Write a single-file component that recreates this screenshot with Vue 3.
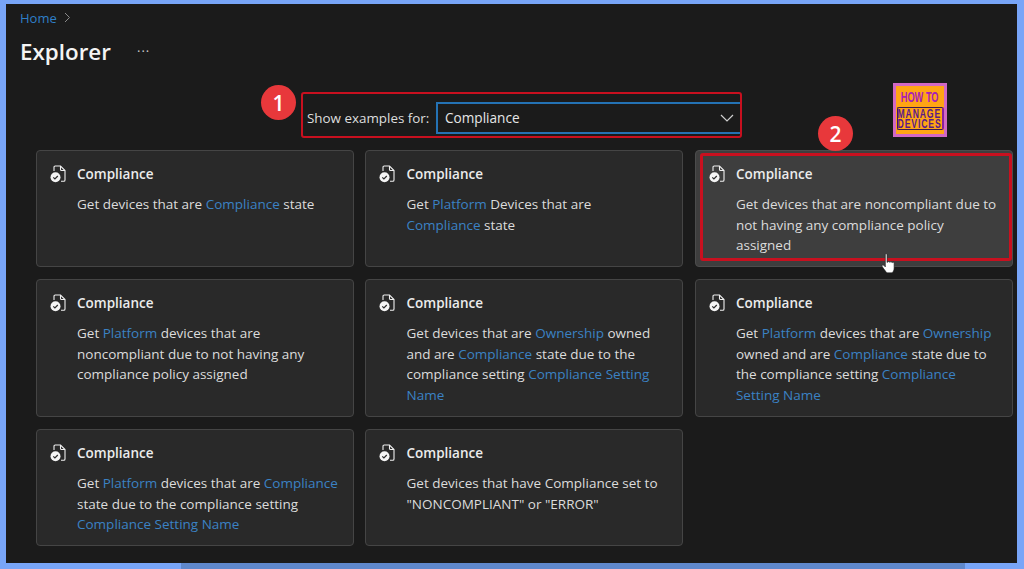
<template>
  <div class="page">
    <div class="panel">
      <nav class="crumbs">
        <span class="home">Home</span>
        <svg class="crumb-arrow" width="7" height="11" viewBox="0 0 7 11"><path d="M1 1l4.5 4.5L1 10" fill="none" stroke="#8a8a8a" stroke-width="1" /></svg>
      </nav>
      <div class="title-row">
        <h1>Explorer</h1>
        <span class="more">···</span>
      </div>

      <div class="toolbar">
        <div class="picker">
          <span class="badge badge-one">1</span>
          <label>Show examples for:</label>
          <div class="select">
            <span>Compliance</span>
            <svg width="14" height="8" viewBox="0 0 14 8"><path d="M1 1l6 6 6-6" fill="none" stroke="#cfcfcf" stroke-width="1.2" /></svg>
          </div>
        </div>
        <div class="logo">
          <span class="how">HOW TO</span>
          <div class="manage">
            <span>MANAGE</span>
            <span>DEVICES</span>
          </div>
        </div>
      </div>

      <div class="cards">
        <div
          v-for="(card, index) in cards"
          :key="index"
          class="card"
          :class="{ active: card.active }"
        >
          <span v-if="card.active" class="badge badge-two">2</span>
          <div v-if="card.active" class="highlight"></div>
          <div class="card-head">
            <svg class="doc" width="17" height="18" viewBox="0 0 17 18">
              <path d="M4 6V2.2C4 1.5 4.500 1 5.200 1H10.500L15 5.500V15c0 .8-.5 1.300-1.200 1.300H11" fill="none" stroke="#f0f0f0" stroke-width="1.1" />
              <path d="M10.500 1v3.400c0 .7.4 1.100 1.100 1.100H15" fill="none" stroke="#f0f0f0" stroke-width="1.1" />
              <circle cx="5.500" cy="12.300" r="5" fill="#f4f4f4" />
              <path d="M3.300 12.400l1.600 1.600 2.900-3" fill="none" stroke="#2a2a2a" stroke-width="1.2" />
            </svg>
            <span class="card-title">Compliance</span>
          </div>
          <p>
            <template v-for="(part, i) in card.text" :key="i">
              <span v-if="part.name" class="link">{{ part.name }}</span>
              <template v-else>{{ part }}</template>
            </template>
          </p>
          <svg v-if="card.active" class="cursor" width="18" height="23" viewBox="0 0 16 22">
            <path d="M4.500 1.500c0-1 1.600-1 1.600 0V9l.6-.2c.2-.8 1.600-.8 1.800 0l.5.1c.3-.7 1.600-.6 1.800.2l.4.1c.4-.6 1.700-.4 1.700.6v4.500c0 1.900-.8 3.700-2 4.700H6c-1-1-3.500-4.500-4.500-6-.7-1 .6-2 1.500-1.200l1.500 1.500z" fill="#fff" stroke="#222" stroke-width=".6" />
          </svg>
        </div>
      </div>
    </div>
    <div class="bottom-strip"></div>
  </div>
</template>

<script setup>
const c = { name: 'Compliance' }
const p = { name: 'Platform' }
const o = { name: 'Ownership' }
const s = { name: 'Compliance Setting Name' }

const cards = [
  { text: ['Get devices that are ', c, ' state'] },
  { text: ['Get ', p, ' Devices that are ', c, ' state'] },
  { text: ['Get devices that are noncompliant due to not having any compliance policy assigned'], active: true },
  { text: ['Get ', p, ' devices that are noncompliant due to not having any compliance policy assigned'] },
  { text: ['Get devices that are ', o, ' owned and are ', c, ' state due to the compliance setting ', s] },
  { text: ['Get ', p, ' devices that are ', o, ' owned and are ', c, ' state due to the compliance setting ', s] },
  { text: ['Get ', p, ' devices that are ', c, ' state due to the compliance setting ', s] },
  { text: ['Get devices that have Compliance set to "NONCOMPLIANT" or "ERROR"'] }
]
</script>

<style>
html,
body {
  margin: 0;
  background: #78a5f8;
}
</style>

<style scoped>
.page {
  width: 1024px;
  height: 569px;
  padding: 4px 6px 0;
  box-sizing: border-box;
  background: #78a5f8;
  position: relative;
  overflow: hidden;
  font-family: "Open Sans", "Noto Sans", sans-serif;
  color: #e6e6e6;
}

.panel {
  width: 1011px;
  height: 559px;
  background: #1b1b1b;
  box-sizing: border-box;
  padding: 6px 0 0 14px;
}

.bottom-strip {
  position: absolute;
  left: 181px;
  right: 59px;
  bottom: 0;
  height: 6px;
  background: #5f88cc;
}

.crumbs {
  display: flex;
  align-items: center;
  gap: 7px;
  height: 15px;
  font-size: 13px;
}

.home {
  color: #2f7fc8;
}

.title-row {
  display: flex;
  align-items: center;
  margin-top: 8px;
  height: 36px;
}

h1 {
  margin: 0;
  font-size: 22.4px;
  font-weight: 600;
  color: #f4f4f4;
  width: 117px;
}

.more {
  font-size: 13px;
  letter-spacing: 1px;
  color: #c8c8c8;
}

.toolbar {
  display: flex;
  height: 81px;
}

.picker {
  position: relative;
  margin: 23px 0 0 281px;
  width: 441px;
  height: 46px;
  box-sizing: border-box;
  border: 2px solid #c8101f;
  border-radius: 3px;
  display: flex;
  align-items: center;
  padding: 5px 0 0 4px;
  font-size: 13.4px;
}

.picker label {
  color: #dedede;
  width: 129px;
  white-space: nowrap;
}

.select {
  flex: 1;
  height: 32px;
  box-sizing: border-box;
  border: 2px solid #2472b4;
  border-right: 0;
  display: flex;
  align-items: center;
  justify-content: space-between;
  padding: 0 6px 0 7px;
  font-size: 13.600px;
  color: #e6e6e6;
}

.badge {
  position: absolute;
  width: 35px;
  height: 35px;
  border-radius: 50%;
  background: #e8383b;
  color: #fff;
  font-size: 21px;
  font-weight: 600;
  display: flex;
  align-items: center;
  justify-content: center;
}

.badge-one {
  left: -42px;
  top: -9px;
}

.badge-two {
  left: 122px;
  top: -35px;
  z-index: 2;
}

.logo {
  width: 54px;
  height: 54px;
  box-sizing: border-box;
  margin: 14px 0 0 151px;
  border: 3px solid #d268c4;
  background: #ffa514;
  padding-top: 5px;
  display: flex;
  flex-direction: column;
  align-items: center;
  font-family: "Liberation Sans", sans-serif;
  font-weight: 700;
  color: #a820b8;
}

.how {
  font-size: 14px;
  line-height: 13px;
  white-space: nowrap;
  transform: scaleX(.66);
}

.manage {
  margin-top: 3px;
  width: 47px;
  height: 23px;
  flex: none;
  box-sizing: border-box;
  border: 1px solid #3a1a50;
  border-right: 2px solid #8a1fa0;
  border-radius: 2px;
  display: flex;
  flex-direction: column;
  align-items: center;
  justify-content: center;
  font-size: 12px;
  line-height: 10px;
  letter-spacing: 1.2px;
  color: #5a1a8a;
}

.manage span {
  white-space: nowrap;
  transform: scaleX(.72);
}

.cards {
  display: grid;
  grid-template-columns: repeat(3, 317.8px);
  grid-template-rows: 117px 138px 117px;
  column-gap: 11.7px;
  row-gap: 12px;
  margin-left: 16px;
}

.card {
  position: relative;
  box-sizing: border-box;
  background: #292929;
  border: 1px solid #454545;
  border-radius: 4px;
  padding: 13px 14px 0 13px;
}

.card.active {
  background: #3e3e3e;
  border-color: #4c4c4c;
}

.highlight {
  position: absolute;
  left: 4px;
  top: 2px;
  right: 0;
  bottom: 5px;
  border: 3px solid #c8101f;
  border-radius: 3px;
}

.card-head {
  display: flex;
  align-items: center;
  gap: 10px;
  height: 20px;
}

.doc {
  flex: none;
}

.card-title {
  font-size: 13.5px;
  font-weight: 600;
  color: #ececec;
}

.card p {
  margin: 10px 0 0 27px;
  font-size: 13.500px;
  line-height: 20.500px;
  color: #dcdcdc;
}

.link {
  color: #3b82c4;
}

.cursor {
  position: absolute;
  left: 184px;
  top: 102px;
}
</style>
